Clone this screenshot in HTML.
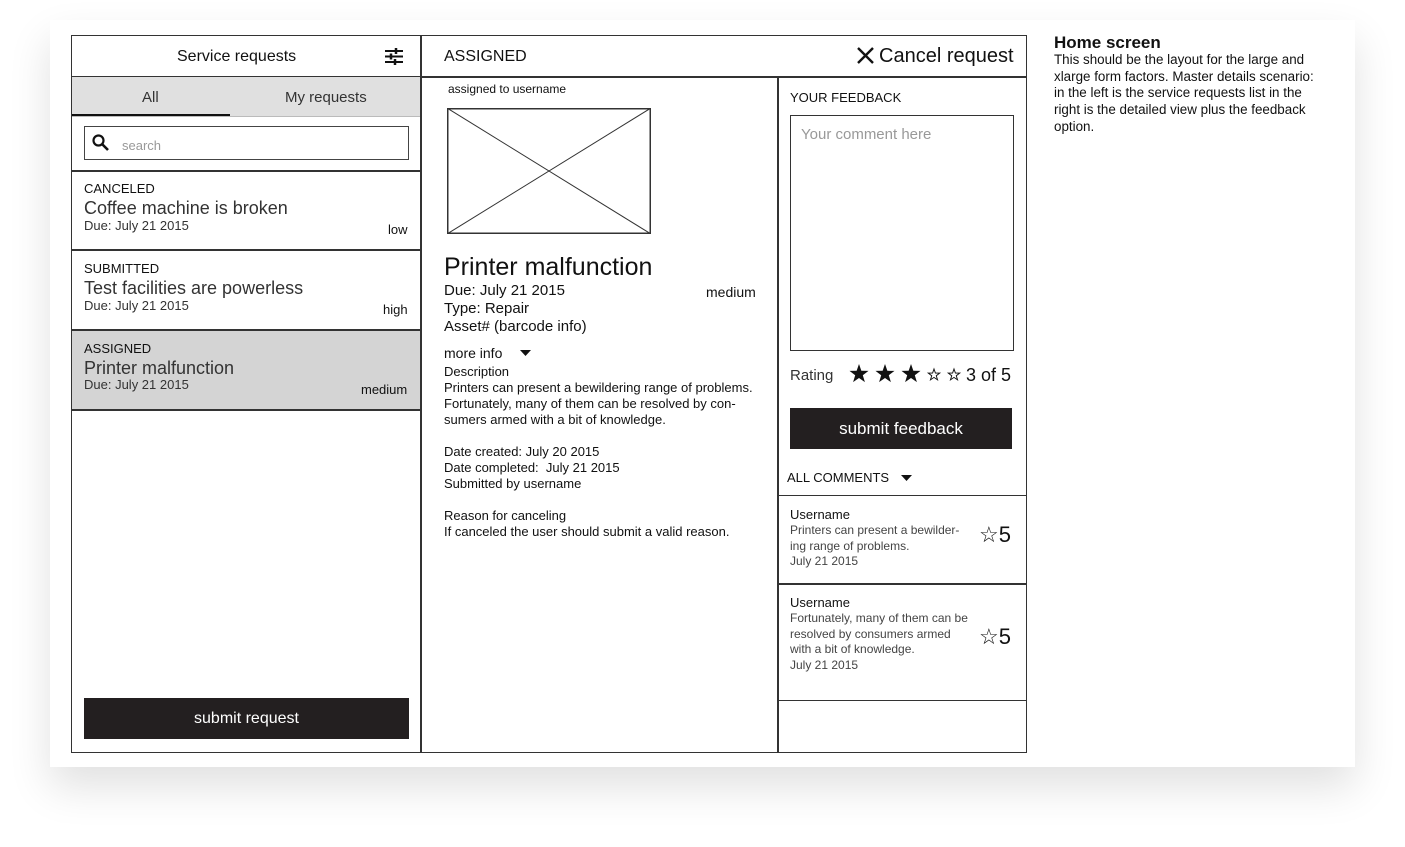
<!DOCTYPE html>
<html><head><meta charset="utf-8"><style>
*{margin:0;padding:0;box-sizing:border-box}
body{width:1405px;height:847px;background:#fff;position:relative;overflow:hidden;font-family:"Liberation Sans",sans-serif;color:#111}
.a{position:absolute}
.card{left:50px;top:20px;width:1305px;height:747px;background:#fff;box-shadow:0 20px 40px rgba(0,0,0,.12)}
.t{position:absolute;white-space:nowrap}
.thin{color:#333;font-weight:300}
.line{position:absolute;background:#333}
</style></head><body>
<div class="a card"></div>
<div class="a" style="left:71px;top:35px;width:956px;height:718px;border:1.5px solid #333;background:#fff"></div>
<div class="line" style="left:71px;top:76px;width:956px;height:1.5px"></div>
<div class="line" style="left:420px;top:35px;width:1.5px;height:718px"></div>
<div class="line" style="left:777px;top:77px;width:1.5px;height:676px"></div>
<div class="t" style="left:177px;top:48px;font-size:16px">Service requests</div>
<svg class="a" style="left:385px;top:48px" width="18" height="17" viewBox="0 0 18 17"><g stroke="#111" stroke-width="2"><line x1="0" y1="3" x2="18" y2="3"/><line x1="0" y1="8.5" x2="18" y2="8.5"/><line x1="0" y1="14" x2="18" y2="14"/></g><g stroke="#111" stroke-width="2.5"><line x1="11" y1="0" x2="11" y2="6"/><line x1="6" y1="5.5" x2="6" y2="11.5"/><line x1="10" y1="11" x2="10" y2="17"/></g></svg>
<div class="t" style="left:444px;top:48px;font-size:16px">ASSIGNED</div>
<svg class="a" style="left:857px;top:47px" width="17" height="17"><g stroke="#111" stroke-width="2.4"><line x1="1" y1="1" x2="16" y2="16"/><line x1="16" y1="1" x2="1" y2="16"/></g></svg>
<div class="t" style="left:879px;top:45px;font-size:20px">Cancel request</div>
<div class="a" style="left:72px;top:77px;width:348px;height:39px;background:#e0e0e0"></div>
<div class="line" style="left:72px;top:114px;width:158px;height:2.5px;background:#111"></div>
<div class="line" style="left:72px;top:116px;width:348px;height:1px;background:#bbb"></div>
<div class="t thin" style="left:142px;top:89px;font-size:15px">All</div>
<div class="t thin" style="left:285px;top:89px;font-size:15px">My requests</div>
<div class="a" style="left:84px;top:126px;width:325px;height:34px;border:1.5px solid #444"></div>
<svg class="a" style="left:92px;top:134px" width="17" height="17"><circle cx="6.5" cy="6.5" r="5" fill="none" stroke="#111" stroke-width="2.2"/><line x1="10" y1="10" x2="16" y2="16" stroke="#111" stroke-width="2.6"/></svg>
<div class="t" style="left:122px;top:138px;font-size:13px;color:#999">search</div>
<div class="line" style="left:71px;top:170px;width:350px;height:1.5px"></div>
<div class="line" style="left:71px;top:249px;width:350px;height:1.5px"></div>
<div class="a" style="left:72px;top:330px;width:348px;height:80px;background:#d4d4d4"></div>
<div class="line" style="left:71px;top:329px;width:350px;height:1.5px"></div>
<div class="line" style="left:71px;top:409px;width:350px;height:1.5px"></div>
<div class="t" style="left:84px;top:181px;font-size:13px">CANCELED</div>
<div class="t thin" style="left:84px;top:198px;font-size:18px">Coffee machine is broken</div>
<div class="t thin" style="left:84px;top:218px;font-size:13px">Due: July 21 2015</div>
<div class="t" style="left:388px;top:222px;font-size:13px">low</div>
<div class="t" style="left:84px;top:261px;font-size:13px">SUBMITTED</div>
<div class="t thin" style="left:84px;top:278px;font-size:18px">Test facilities are powerless</div>
<div class="t thin" style="left:84px;top:298px;font-size:13px">Due: July 21 2015</div>
<div class="t" style="left:383px;top:302px;font-size:13px">high</div>
<div class="t" style="left:84px;top:341px;font-size:13px">ASSIGNED</div>
<div class="t thin" style="left:84px;top:358px;font-size:18px">Printer malfunction</div>
<div class="t thin" style="left:84px;top:377px;font-size:13px">Due: July 21 2015</div>
<div class="t" style="left:361px;top:382px;font-size:13px">medium</div>
<div class="a" style="left:84px;top:698px;width:325px;height:41px;background:#231f20"></div>
<div class="t" style="left:84px;top:710px;width:325px;text-align:center;font-size:16px;color:#fff">submit request</div>
<div class="t" style="left:448px;top:82px;font-size:12px">assigned to username</div>
<svg class="a" style="left:447px;top:108px" width="204" height="126"><rect x="0.75" y="0.75" width="202.5" height="124.5" fill="none" stroke="#333" stroke-width="1.5"/><line x1="0" y1="0" x2="204" y2="126" stroke="#333"/><line x1="204" y1="0" x2="0" y2="126" stroke="#333"/></svg>
<div class="t" style="left:444px;top:253px;font-size:25px">Printer malfunction</div>
<div class="t" style="left:444px;top:282px;font-size:15px">Due: July 21 2015</div>
<div class="t" style="left:706px;top:284px;font-size:14px">medium</div>
<div class="t" style="left:444px;top:300px;font-size:15px">Type: Repair</div>
<div class="t" style="left:444px;top:318px;font-size:15px">Asset# (barcode info)</div>
<div class="t" style="left:444px;top:345px;font-size:14px">more info</div>
<svg class="a" style="left:520px;top:350px" width="11" height="6"><polygon points="0,0 11,0 5.5,6" fill="#111"/></svg>
<div class="a" style="left:444px;top:364px;font-size:13px;line-height:16px">Description<br>Printers can present a bewildering range of problems.<br>Fortunately, many of them can be resolved by con-<br>sumers armed with a bit of knowledge.<br><br>Date created: July 20 2015<br>Date completed:&nbsp; July 21 2015<br>Submitted by username<br><br>Reason for canceling<br>If canceled the user should submit a valid reason.</div>
<div class="t" style="left:790px;top:90px;font-size:13px">YOUR FEEDBACK</div>
<div class="a" style="left:790px;top:115px;width:224px;height:236px;border:1.5px solid #333"></div>
<div class="t" style="left:801px;top:126px;font-size:15px;color:#999;font-weight:300">Your comment here</div>
<div class="t thin" style="left:790px;top:367px;font-size:15px">Rating</div>
<svg class="a" style="left:846px;top:362px" width="118" height="24" viewBox="0 0 118 24">
<defs><polygon id="s" points="0,-10 2.35,-3.2 9.5,-3.1 3.8,1.2 5.9,8.1 0,4 -5.9,8.1 -3.8,1.2 -9.5,-3.1 -2.35,-3.2"/></defs>
<use href="#s" x="13" y="12" fill="#111"/><use href="#s" x="39" y="12" fill="#111"/><use href="#s" x="65" y="12" fill="#111"/>
<g fill="none" stroke="#111" stroke-width="1.6"><use href="#s" transform="translate(88,13) scale(0.6)"/><use href="#s" transform="translate(108,13) scale(0.6)"/></g>
</svg>
<div class="t" style="left:966px;top:365px;font-size:18px">3 of 5</div>
<div class="a" style="left:790px;top:408px;width:222px;height:41px;background:#231f20"></div>
<div class="t" style="left:790px;top:419px;width:222px;text-align:center;font-size:17px;color:#fff">submit feedback</div>
<div class="t" style="left:787px;top:470px;font-size:13px">ALL COMMENTS</div>
<svg class="a" style="left:901px;top:475px" width="11" height="6"><polygon points="0,0 11,0 5.5,6" fill="#111"/></svg>
<div class="a" style="left:777px;top:495px;width:250px;height:206px;border:1.5px solid #333"></div>
<div class="line" style="left:777px;top:583px;width:250px;height:1.5px"></div>
<div class="t" style="left:790px;top:507px;font-size:13px">Username</div>
<div class="a thin" style="left:790px;top:523px;font-size:12px;line-height:15.5px;color:#444">Printers can present a bewilder-<br>ing range of problems.<br>July 21 2015</div>
<div class="t" style="left:979px;top:522px;font-size:22px">☆5</div>
<div class="t" style="left:790px;top:595px;font-size:13px">Username</div>
<div class="a thin" style="left:790px;top:611px;font-size:12px;line-height:15.5px;color:#444">Fortunately, many of them can be<br>resolved by consumers armed<br>with a bit of knowledge.<br>July 21 2015</div>
<div class="t" style="left:979px;top:624px;font-size:22px">☆5</div>
<div class="t" style="left:1054px;top:33px;font-size:17px;font-weight:bold">Home screen</div>
<div class="a" style="left:1054px;top:52px;width:290px;font-size:13.4px;line-height:16.7px">This should be the layout for the large and<br>xlarge form factors. Master details scenario:<br>in the left is the service requests list in the<br>right is the detailed view plus the feedback<br>option.</div>
</body></html>
